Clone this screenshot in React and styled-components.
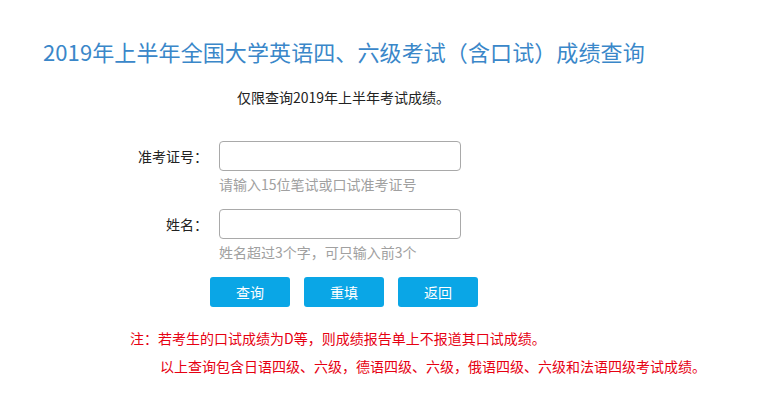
import React from 'react';
import styled, { createGlobalStyle } from 'styled-components';

const GlobalStyle = createGlobalStyle`
  body {
    margin: 0;
    background: #fff;
    font-family: "Microsoft YaHei", "Noto Sans CJK SC", "Noto Sans", sans-serif;
    font-size: 14px;
    color: #333;
  }
`;

const Page = styled.div`
  width: 761px;
  padding-bottom: 20px;
`;

const Title = styled.h1`
  margin: 0;
  padding: 38px 0 0 43px;
  font-size: 22px;
  line-height: 26px;
  font-weight: normal;
  color: #3a87c9;
  letter-spacing: 0.1px;
`;

const Subtitle = styled.p`
  margin: 23px 0 0 237px;
  font-size: 14px;
  line-height: 20px;
  color: #222;
`;

const Form = styled.form`
  margin-top: 34px;
  display: grid;
  grid-template-columns: 208px 242px;
  column-gap: 11px;
  align-items: center;
`;

const Label = styled.label`
  text-align: right;
  font-size: 14px;
  color: #222;
  line-height: 20px;
  margin-top: ${p => p.$top || 0}px;
`;

const Input = styled.input`
  box-sizing: border-box;
  height: 30px;
  width: 242px;
  border: 1px solid #a9a9a9;
  border-radius: 4px;
  outline: none;
  padding: 0 8px;
  margin-top: ${p => p.$top || 0}px;
  font: inherit;
`;

const Hint = styled.div`
  grid-column: 2;
  margin-top: 3px;
  font-size: 14px;
  line-height: 20px;
  color: #a0a0a0;
`;

const Buttons = styled.div`
  display: flex;
  gap: 14px;
  margin: 15px 0 0 210px;
`;

const Button = styled.button`
  width: 80px;
  height: 30px;
  border: none;
  border-radius: 3px;
  background: #0aa6e6;
  color: #fff;
  font: inherit;
  font-size: 14px;
  cursor: pointer;
`;

const Note = styled.p`
  margin: ${p => p.$top}px 0 0 ${p => p.$left}px;
  font-size: 14px;
  line-height: 20px;
  color: #e60012;
`;

export default function App() {
  return (
    <Page>
      <GlobalStyle />
      <Title>2019年上半年全国大学英语四、六级考试（含口试）成绩查询</Title>
      <Subtitle>仅限查询2019年上半年考试成绩。</Subtitle>
      <Form onSubmit={e => e.preventDefault()}>
        <Label htmlFor="zkzh">准考证号：</Label>
        <Input id="zkzh" type="text" />
        <Hint>请输入15位笔试或口试准考证号</Hint>
        <Label htmlFor="xm" $top={15}>姓名：</Label>
        <Input id="xm" type="text" $top={15} />
        <Hint>姓名超过3个字，可只输入前3个</Hint>
      </Form>
      <Buttons>
        <Button type="button">查询</Button>
        <Button type="button">重填</Button>
        <Button type="button">返回</Button>
      </Buttons>
      <Note $top={21} $left={130}>注：若考生的口试成绩为D等，则成绩报告单上不报道其口试成绩。</Note>
      <Note $top={8} $left={160}>以上查询包含日语四级、六级，德语四级、六级，俄语四级、六级和法语四级考试成绩。</Note>
    </Page>
  );
}
